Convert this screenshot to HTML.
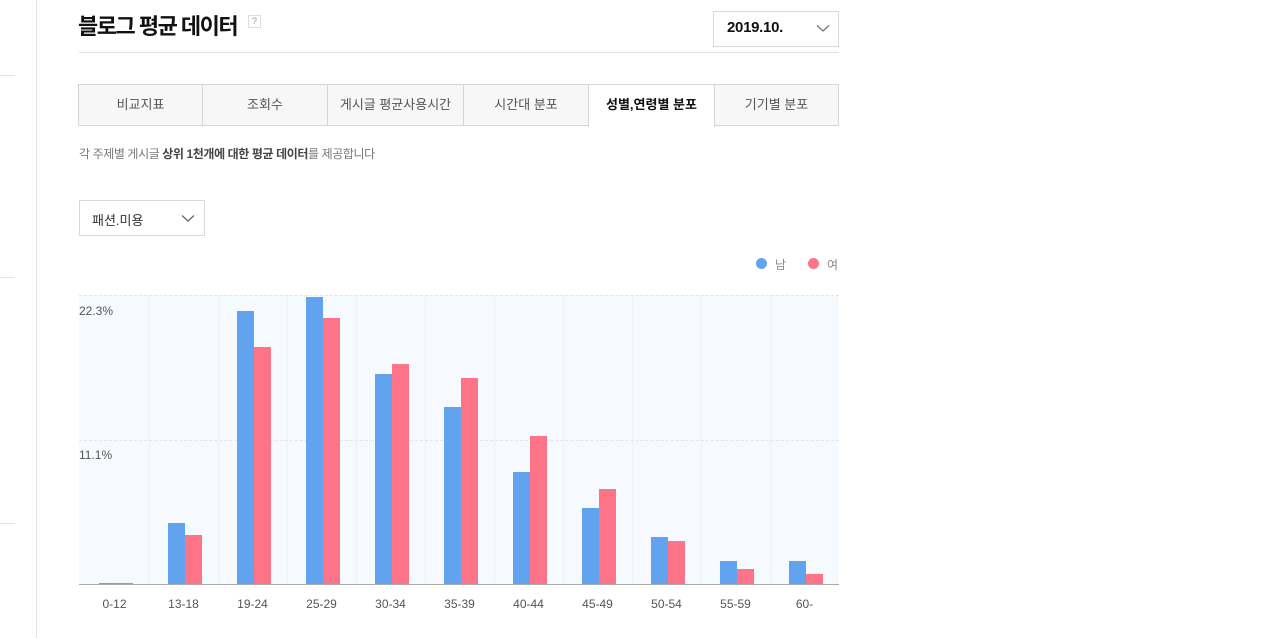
<!DOCTYPE html>
<html><head><meta charset="utf-8"><style>
*{margin:0;padding:0;box-sizing:border-box}
body{width:1280px;height:638px;background:#fff;position:relative;overflow:hidden;font-family:"Liberation Sans","Noto Sans CJK KR",sans-serif;color:#333}
.a{position:absolute}
.tab{position:absolute;top:84px;height:42px;background:#f7f7f7;border:1px solid #d5d5d5;border-left:none;font-size:13px;color:#555;text-align:center;line-height:40px}
.b{position:absolute;background:#62a3ef}
.r{position:absolute;background:#fd7387}
.vg{position:absolute;top:295px;height:289px;width:1px;background:#edf2f7}
.xl{position:absolute;top:597px;width:69px;text-align:center;font-size:12px;color:#555}
</style></head><body>
<div class="a" style="left:36px;top:0;width:1px;height:638px;background:#e4e4e4"></div>
<div class="a" style="left:0;top:75px;width:15px;height:1px;background:#e4e4e4"></div>
<div class="a" style="left:0;top:277px;width:15px;height:1px;background:#e4e4e4"></div>
<div class="a" style="left:0;top:523px;width:15px;height:1px;background:#e4e4e4"></div>

<div class="a" style="left:78px;top:9px;font-size:22px;font-weight:bold;color:#111;letter-spacing:-1.5px">블로그 평균 데이터</div>
<div class="a" style="left:248px;top:15px;width:13px;height:13px;border:1px solid #ddd;font-size:9px;color:#999;text-align:center;line-height:11px">?</div>
<div class="a" style="left:79px;top:52px;width:760px;height:1px;background:#e2e2e2"></div>
<div class="a" style="left:713px;top:11px;width:126px;height:36px;border:1px solid #d9d9d9;background:#fff"></div>
<div class="a" style="left:727px;top:19px;font-size:15px;color:#111;font-weight:bold;letter-spacing:-0.3px">2019.10.</div>
<svg class="a" style="left:816px;top:24px" width="14" height="9"><path d="M1 1.5 L7 7 L13 1.5" fill="none" stroke="#777" stroke-width="1.3"/></svg>

<div class="tab" style="left:78px;width:125px;border-left:1px solid #d5d5d5">비교지표</div>
<div class="tab" style="left:203px;width:125px">조회수</div>
<div class="tab" style="left:328px;width:136px">게시글 평균사용시간</div>
<div class="tab" style="left:464px;width:125px">시간대 분포</div>
<div class="tab" style="left:588px;width:127px;background:#fff;color:#111;font-weight:bold;border-bottom:none;border-left:1px solid #d5d5d5;height:43px">성별,연령별 분포</div>
<div class="tab" style="left:714px;width:125px;border-left:1px solid #d5d5d5">기기별 분포</div>

<div class="a" style="left:79px;top:145px;font-size:12px;color:#777;letter-spacing:-0.4px">각 주제별 게시글 <b style="color:#444">상위 1천개에 대한 평균 데이터</b>를 제공합니다</div>

<div class="a" style="left:79px;top:200px;width:126px;height:36px;border:1px solid #d9d9d9"></div>
<div class="a" style="left:92px;top:210px;font-size:13px;color:#333">패션.미용</div>
<svg class="a" style="left:181px;top:214px" width="14" height="9"><path d="M1 1.5 L7 7 L13 1.5" fill="none" stroke="#666" stroke-width="1.3"/></svg>

<div class="a" style="left:756px;top:258px;width:11px;height:11px;border-radius:50%;background:#62a3ef"></div>
<div class="a" style="left:775px;top:256px;font-size:12px;color:#888">남</div>
<div class="a" style="left:808px;top:258px;width:11px;height:11px;border-radius:50%;background:#fd7387"></div>
<div class="a" style="left:827px;top:256px;font-size:12px;color:#888">여</div>

<div class="a" style="left:79px;top:295px;width:760px;height:289px;background:#f6fafe"></div>
<div class="vg" style="left:149px"></div><div class="vg" style="left:218px"></div><div class="vg" style="left:287px"></div><div class="vg" style="left:356px"></div><div class="vg" style="left:425px"></div><div class="vg" style="left:494px"></div><div class="vg" style="left:563px"></div><div class="vg" style="left:632px"></div><div class="vg" style="left:701px"></div><div class="vg" style="left:770px"></div>
<div class="a" style="left:79px;top:295px;width:760px;border-top:1px dashed #dfe6ee"></div>
<div class="a" style="left:79px;top:440px;width:760px;border-top:1px dashed #dfe6ee"></div>
<div class="a" style="left:79px;top:304px;font-size:12px;color:#555">22.3%</div>
<div class="a" style="left:79px;top:448px;font-size:12px;color:#555">11.1%</div>

<div class="b" style="left:99px;top:583px;width:17px;height:1px"></div><div class="r" style="left:116px;top:583px;width:17px;height:1px"></div>
<div class="b" style="left:168px;top:523px;width:17px;height:61px"></div><div class="r" style="left:185px;top:535px;width:17px;height:49px"></div>
<div class="b" style="left:237px;top:311px;width:17px;height:273px"></div><div class="r" style="left:254px;top:347px;width:17px;height:237px"></div>
<div class="b" style="left:306px;top:297px;width:17px;height:287px"></div><div class="r" style="left:323px;top:318px;width:17px;height:266px"></div>
<div class="b" style="left:375px;top:374px;width:17px;height:210px"></div><div class="r" style="left:392px;top:364px;width:17px;height:220px"></div>
<div class="b" style="left:444px;top:407px;width:17px;height:177px"></div><div class="r" style="left:461px;top:378px;width:17px;height:206px"></div>
<div class="b" style="left:513px;top:472px;width:17px;height:112px"></div><div class="r" style="left:530px;top:436px;width:17px;height:148px"></div>
<div class="b" style="left:582px;top:508px;width:17px;height:76px"></div><div class="r" style="left:599px;top:489px;width:17px;height:95px"></div>
<div class="b" style="left:651px;top:537px;width:17px;height:47px"></div><div class="r" style="left:668px;top:541px;width:17px;height:43px"></div>
<div class="b" style="left:720px;top:561px;width:17px;height:23px"></div><div class="r" style="left:737px;top:569px;width:17px;height:15px"></div>
<div class="b" style="left:789px;top:561px;width:17px;height:23px"></div><div class="r" style="left:806px;top:574px;width:17px;height:10px"></div>
<div class="a" style="left:79px;top:584px;width:760px;height:1px;background:#aaa"></div>

<div class="xl" style="left:80px">0-12</div><div class="xl" style="left:149px">13-18</div><div class="xl" style="left:218px">19-24</div><div class="xl" style="left:287px">25-29</div><div class="xl" style="left:356px">30-34</div><div class="xl" style="left:425px">35-39</div><div class="xl" style="left:494px">40-44</div><div class="xl" style="left:563px">45-49</div><div class="xl" style="left:632px">50-54</div><div class="xl" style="left:701px">55-59</div><div class="xl" style="left:770px">60-</div>
</body></html>
